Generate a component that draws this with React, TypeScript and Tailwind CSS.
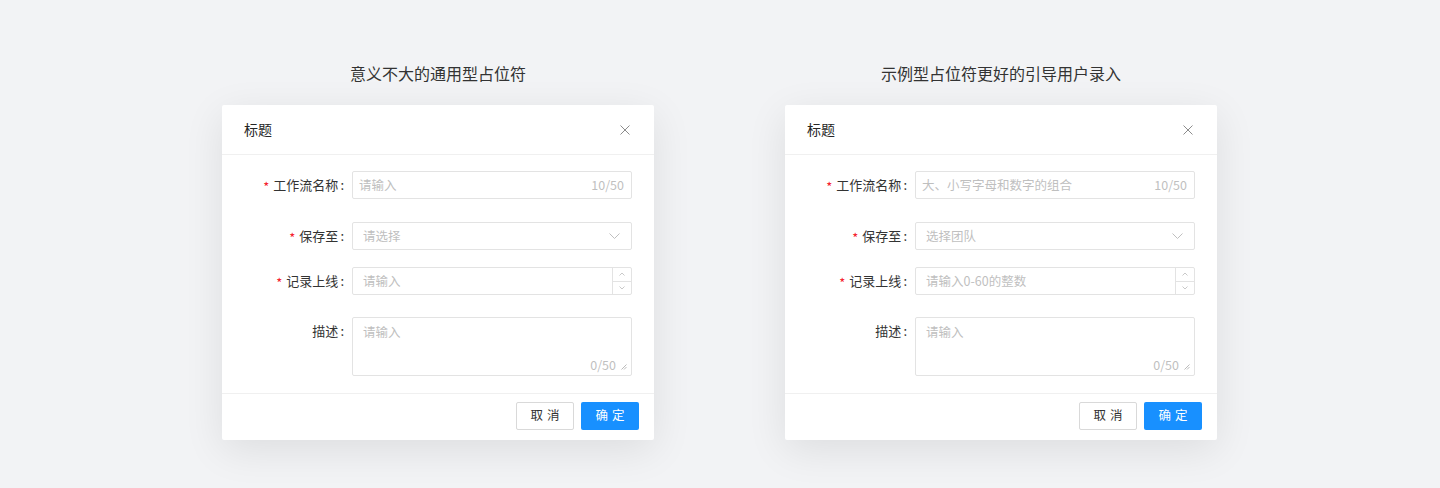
import React from "react";

const font = { fontFamily: '"Noto Sans CJK SC", "Noto Sans", sans-serif' };

const Label = ({ text, required }: { text: string; required?: boolean }) => (
  <div className="w-[130px] shrink-0 h-[28px] flex justify-end items-center pr-[8px] text-[13px] leading-[28px] text-[#333]">
    {required && <span className="text-[#f5222d] mr-[4px] text-[13px] leading-none mt-[3px]">*</span>}
    <span>{text}</span>
    <span className="ml-[2px]">:</span>
  </div>
);

const Chevron = () => (
  <svg width="11" height="6" viewBox="0 0 11 6" fill="none">
    <path d="M0.5 0.5L5.5 5.5L10.5 0.5" stroke="#bfbfbf" strokeWidth="1" />
  </svg>
);

const Stepper = () => (
  <div className="w-[19px] h-full border-l border-[#e3e3e3] flex flex-col">
    <div className="flex-1 flex items-center justify-center border-b border-[#e3e3e3]">
      <svg width="6" height="4" viewBox="0 0 6 4" fill="none">
        <path d="M0.5 3.5L3 1L5.5 3.5" stroke="#bbb" strokeWidth="0.8" />
      </svg>
    </div>
    <div className="flex-1 flex items-center justify-center">
      <svg width="6" height="4" viewBox="0 0 6 4" fill="none">
        <path d="M0.5 0.5L3 3L5.5 0.5" stroke="#bbb" strokeWidth="0.8" />
      </svg>
    </div>
  </div>
);

const Dialog = ({
  title,
  namePh,
  selectPh,
  numberPh,
}: {
  title: string;
  namePh: string;
  selectPh: string;
  numberPh: string;
}) => {
  return (
    <div className="flex flex-col items-center">
      <h2 className="text-[16px] leading-[24px] text-[#333] mb-[20px]">{title}</h2>
      <div className="w-[432px] bg-white rounded-[2px] shadow-[0_10px_40px_rgba(0,0,0,0.09)]">
        <div className="h-[50px] px-[22px] flex items-center justify-between border-b border-[#f0f0f0]">
          <span className="text-[14px] text-[#262626]">标题</span>
          <svg width="10" height="10" viewBox="0 0 10 10" fill="none" className="mr-[2px]">
            <path d="M0.5 0.5L9.5 9.5M9.5 0.5L0.5 9.5" stroke="#8c8c8c" strokeWidth="1" />
          </svg>
        </div>

        <div className="pt-[16px] pr-[22px] pb-[17px] flex flex-col">
          <div className="flex">
            <Label text="工作流名称" required />
            <div className="flex-1 h-[28px] border border-[#e3e3e3] rounded-[2px] flex items-center justify-between pl-[6px] pr-[7px] text-[12.5px] text-[#bfbfbf]">
              <span>{namePh}</span>
              <span>10/50</span>
            </div>
          </div>

          <div className="flex mt-[23px]">
            <Label text="保存至" required />
            <div className="flex-1 h-[28px] border border-[#e3e3e3] rounded-[2px] flex items-center justify-between pl-[10px] pr-[11px] text-[12.5px] text-[#bfbfbf]">
              <span>{selectPh}</span>
              <Chevron />
            </div>
          </div>

          <div className="flex mt-[17px]">
            <Label text="记录上线" required />
            <div className="flex-1 h-[28px] border border-[#e3e3e3] rounded-[2px] flex items-center justify-between pl-[10px] text-[12.5px] text-[#bfbfbf]">
              <span>{numberPh}</span>
              <Stepper />
            </div>
          </div>

          <div className="flex items-start mt-[22px]">
            <Label text="描述" />
            <div className="relative flex-1 h-[59px] border border-[#e3e3e3] rounded-[2px] pl-[10px] pt-[2px] text-[12.5px] text-[#bfbfbf]">
              <span className="leading-[24px]">请输入</span>
              <div className="absolute right-[4px] bottom-[0px] flex items-center gap-[5px]">
                <span className="leading-[20px]">0/50</span>
                <svg width="6" height="6" viewBox="0 0 6 6" fill="none" className="mt-[4px]">
                  <path d="M0.5 5.5L5.5 0.5M3 5.5L5.5 3" stroke="#aaa" strokeWidth="0.8" />
                </svg>
              </div>
            </div>
          </div>
        </div>

        <div className="h-[47px] border-t border-[#f0f0f0] flex items-center justify-end gap-[7px] pr-[15px] pb-[3px]">
          <button className="w-[58px] h-[28px] border border-[#d9d9d9] rounded-[2px] bg-white text-[12.5px] text-[#333] tracking-[4px] pl-[4px]">
            取消
          </button>
          <button className="w-[58px] h-[28px] rounded-[2px] bg-[#1890ff] text-[12.5px] text-white tracking-[4px] pl-[4px]">
            确定
          </button>
        </div>
      </div>
    </div>
  );
}

export default function App() {
  return (
    <div className="w-[1440px] h-[488px] bg-[#f2f3f5] flex gap-[131px] pl-[222px] pt-[61px]" style={font}>
      <Dialog title="意义不大的通用型占位符" namePh="请输入" selectPh="请选择" numberPh="请输入" />
      <Dialog
        title="示例型占位符更好的引导用户录入"
        namePh="大、小写字母和数字的组合"
        selectPh="选择团队"
        numberPh="请输入0-60的整数"
      />
    </div>
  );
}
